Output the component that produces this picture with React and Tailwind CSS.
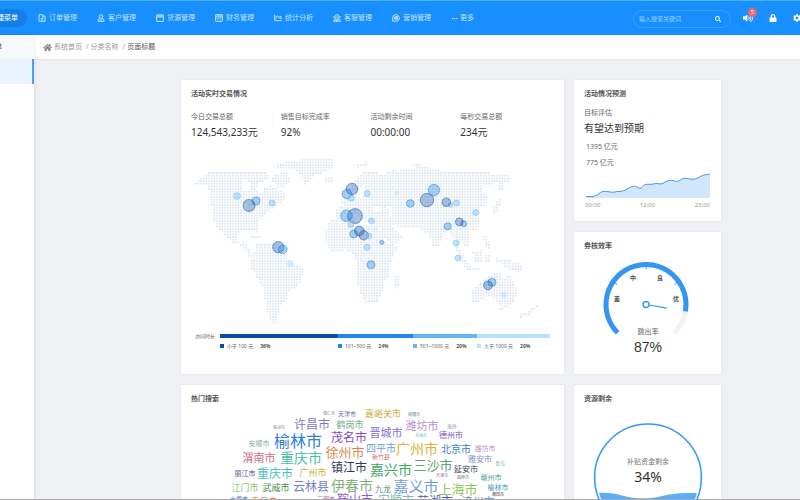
import React from 'react';
import { FaHome, FaSearch, FaVolumeUp, FaLock, FaCog } from 'react-icons/fa';
import { Ellipsis } from 'lucide-react';

const NAV = [
  { label: '订单管理', Icon: OrderIcon },
  { label: '客户管理', Icon: ClientIcon },
  { label: '货源管理', Icon: BoxIcon },
  { label: '财务管理', Icon: FinanceIcon },
  { label: '统计分析', Icon: TrendIcon },
  { label: '客服管理', Icon: ServiceIcon },
  { label: '营销管理', Icon: MarketIcon },
];

function Stroke({ children, className }) {
  return (
    <svg viewBox="0 0 24 24" fill="none" stroke="currentColor" strokeWidth="3" className={className} aria-hidden="true">
      {children}
    </svg>
  );
}
function OrderIcon({ className }) {
  return <Stroke className={className}><path d="M3 2h12l6 6v14H3zM14 2v7h7M8 13h8M8 18h8" /></Stroke>;
}
function ClientIcon({ className }) {
  return <Stroke className={className}><circle cx="12" cy="7.500" r="5.500" /><path d="M8 12l-5 6v4h18v-4l-5-6M8 18h8" /></Stroke>;
}
function BoxIcon({ className }) {
  return <Stroke className={className}><path d="M2 9h20v13H2zM2 9V3h20v6M8 1v8M16 1v8" /></Stroke>;
}
function FinanceIcon({ className }) {
  return <Stroke className={className}><path d="M2 2h20v20H2zM2 9h20M6 5.500h12M7 13.500h3M14 13.500h3M7 18h3M14 18h3" /></Stroke>;
}
function TrendIcon({ className }) {
  return <Stroke className={className}><path d="M2 3v17h21M6 15V8l5-2 4 4 6-3v8M15 10l6 6" /></Stroke>;
}
function ServiceIcon({ className }) {
  return <Stroke className={className}><path d="M6 8a6 6 0 0 1 12 0v2a6 6 0 0 1-12 0zM3 6v6M21 6v6M8 16l-6 2v4h20v-4l-6-2M8 9h8M8 20h8" /></Stroke>;
}
function MarketIcon({ className }) {
  return <Stroke className={className}><path d="M12 2a10 10 0 1 1-6 18l-4 2V12A10 10 0 0 1 12 2zM8 15V9l8-2v9zM8 12h8M12 8v8" /></Stroke>;
}

const LAND = [
  [[195,184],[201,178],[207,173],[235,172],[262,171],[270,174],[268,179],[259,183],[256,190],[262,193],[266,187],[270,186],[280,190],[286,196],[286,201],[276,206],[268,211],[262,218],[258,223],[257,234],[253,230],[243,230],[236,233],[236,240],[241,243],[246,241],[247,246],[253,256],[249,256],[243,247],[232,242],[222,234],[215,224],[212,212],[211,196],[207,186]],
  [[286,160],[334,159],[332,168],[322,173],[313,176],[305,184],[301,176],[297,171],[286,168]],
  [[270,180],[280,172],[288,173],[290,182],[284,188],[276,186]],
  [[276,165],[290,163],[290,168],[276,170]],
  [[326,176],[334,176],[334,181],[326,181]],
  [[358,164],[368,162],[366,167],[358,168]],
  [[392,169],[396,168],[396,172],[392,172]],
  [[413,164],[422,163],[422,167],[413,167]],
  [[256,245],[272,243],[283,248],[290,262],[303,267],[303,274],[298,287],[290,289],[287,299],[280,306],[277,317],[278,325],[271,323],[266,307],[263,287],[257,279],[250,266],[254,252]],
  [[330,219],[345,217],[353,218],[356,223],[365,225],[377,224],[380,231],[386,243],[398,246],[393,258],[388,266],[388,277],[383,284],[382,294],[377,302],[367,303],[362,299],[358,284],[358,270],[355,256],[346,250],[332,252],[325,243],[324,236]],
  [[395,276],[401,274],[399,286],[395,290]],
  [[378,225],[388,223],[395,229],[402,236],[400,241],[390,245],[384,238]],
  [[336,217],[336,208],[344,207],[341,202],[348,199],[352,195],[350,190],[352,183],[360,174],[370,170],[377,172],[383,176],[388,172],[397,171],[405,169],[413,168],[427,165],[433,170],[457,171],[480,172],[510,175],[512,180],[503,183],[503,190],[499,190],[497,183],[490,184],[482,187],[484,193],[488,199],[486,206],[479,208],[476,213],[480,218],[480,225],[475,230],[468,231],[470,238],[470,246],[465,246],[461,240],[459,246],[461,255],[457,252],[455,240],[448,230],[443,236],[438,248],[433,245],[428,234],[421,229],[405,228],[396,226],[388,225],[378,225],[374,221],[365,221],[361,214],[365,221],[358,217],[353,213],[346,212],[343,217]],
  [[341,190],[346,191],[346,201],[341,202]],
  [[499,198],[502,201],[498,212],[492,215],[493,210]],
  [[457,252],[462,254],[470,266],[480,269],[478,272],[466,269],[460,260]],
  [[473,253],[482,250],[482,261],[474,261]],
  [[485,254],[492,253],[489,262],[485,263]],
  [[495,258],[510,260],[524,265],[519,272],[507,268],[497,262]],
  [[482,235],[486,235],[491,247],[487,249]],
  [[473,288],[480,283],[490,276],[496,273],[501,273],[503,279],[507,280],[508,272],[513,282],[518,292],[515,299],[508,307],[499,306],[496,300],[487,296],[480,301],[473,302]],
  [[536,305],[539,306],[530,314],[519,318],[518,315],[528,312]],
  [[499,309],[504,309],[502,312]],
  [[249,236],[257,235],[263,239],[256,239]],
];

const WATER = [
  [[373,206],[381,206],[381,211],[373,211]],
  [[387,206],[392,207],[393,216],[389,216]],
  [[359,192],[363,186],[366,186],[363,197],[356,200]],
  [[242,180],[252,182],[250,190],[244,192]],
  [[240,204],[247,204],[247,208],[240,208]],
];

function inside(shape, x, y) {
  let hit = false;
  for (let i = 0, j = shape.length - 1; i < shape.length; j = i++) {
    const [xi, yi] = shape[i];
    const [xj, yj] = shape[j];
    if (yi > y !== yj > y && x < ((xj - xi) * (y - yi)) / (yj - yi) + xi) hit = !hit;
  }
  return hit;
}

function landDots() {
  const step = 8 / 3;
  let d = '';
  for (let y = 157; y < 328; y += step) {
    for (let x = 193; x < 552; x += step) {
      if (LAND.some((s) => inside(s, x, y)) && !WATER.some((s) => inside(s, x, y))) {
        d += `M${(x - 0.9).toFixed(2)} ${(y - 0.9).toFixed(2)}h1.8v1.8h-1.8z`;
      }
    }
  }
  return d;
}
const DOTS = landDots();

const TONES = {
  dark: ['#1f5fb8', 0.38, '#0d47a1'],
  mid: ['#2f97f0', 0.42, '#1976d2'],
  light: ['#7cc4f8', 0.45, '#64b5f6'],
  faint: ['#90cdf8', 0.3, '#bfe2fb'],
};
const BUBBLES = [
  [237,196,3.3,'light'],[256,201,4,'mid'],[249,205.5,6,'dark'],[272,203,3,'light'],
  [347,194,4.8,'mid'],[352,189,5.7,'dark'],[351,198,3.2,'light'],[367,193.5,3,'light'],
  [346.5,215.7,5.8,'mid'],[355,216,7.4,'dark'],[371.5,221,3,'light'],[351,224.5,3,'light'],
  [397,193,2,'faint'],[410.3,203.5,3.8,'mid'],[434,190,5.7,'mid'],[427,200,6.7,'dark'],
  [450.5,205,2.2,'light'],[446.3,202.2,4.3,'dark'],[456.5,203,3,'light'],[476,212.5,3,'light'],
  [463.7,223.8,3,'mid'],[459.3,221.8,3.9,'dark'],[278.3,247.2,5.6,'dark'],[282.8,249.4,4.4,'mid'],
  [290.3,263.7,3,'faint'],[353.7,234,4,'mid'],[359.3,231,4.8,'dark'],[363.7,235.3,4.7,'dark'],
  [369,236,2.8,'light'],[367,247.3,3,'light'],[371,264.8,4,'mid'],[381.8,242.4,2,'mid'],
  [447.7,226.3,3.6,'mid'],[456,243,2.9,'light'],[458,258,2.9,'light'],
  [492,282.3,4,'mid'],[488,285.4,4.4,'dark'],[503.8,294.8,2.8,'faint'],
];

const LEGEND = [
  { name: '小于 100 元', share: '36%', color: 'bg-[#0d4ba8]' },
  { name: '101~500 元', share: '24%', color: 'bg-[#1e88f0]' },
  { name: '501~1000 元', share: '20%', color: 'bg-[#64b5f6]' },
  { name: '大于 1000 元', share: '20%', color: 'bg-[#bbe0fb]' },
];

const STATS = [
  ['今日交易总额', '124,543,233元'],
  ['销售目标完成率', '92%'],
  ['活动剩余时间', '00:00:00'],
  ['每秒交易总额', '234元'],
];

const WORDS = [
  ['铜仁市',329,413,4,'#5e7f6b'],['天津市',347,413,6,'#6f5fa8'],['嘉峪关市',383,413,9,'#cdae3a'],['南通市',414,414,4,'#4f8f6a'],
  ['许昌市',312,424,12,'#8578bd'],['鹤岗市',350,424,9,'#6db08a'],['潍坊市',422,425,11,'#b98fc8'],['海外',452,425,5,'#a088a8'],
  ['株洲市',279,427,4,'#7a8f7a'],['晋城市',386,432,11,'#7f72d0'],['北海市',421,435,4,'#6dbfa8'],['德州市',451,434,8,'#7b4fc0'],
  ['安顺市',259,442,7,'#7fb0a0'],['榆林市',298,440,16,'#2f80d8'],['茂名市',349,437,12,'#8549c8'],['四平市',381,447,10,'#6f9fd8'],
  ['广州市',417,448,14,'#dcb33a'],['北京市',456,448,10,'#3b7dc8'],['潍坊市',485,447,7,'#b58cc0'],['新竹县',381,456,6,'#c86f80'],
  ['徐州市',345,451,13,'#d8894f'],['渭南市',259,457,11,'#cf6a80'],['重庆市',301,457,14,'#4fbfa8'],['镇江市',349,467,12,'#2f3560'],
  ['嘉兴市',391,469,14,'#3fa860'],['三沙市',433,464,13,'#5f9f70'],['雅安市',480,458,8,'#7f8fc8'],['青岛',500,462,5,'#7fa8c0'],
  ['延安市',466,468,8,'#3a4050'],['丽江市',245,472,7,'#4f4f80'],['重庆市',275,473,12,'#4fc0b8'],['广州市',313,472,9,'#d0b040'],
  ['天津市',442,475,4,'#9060b0'],['固原市',463,477,4,'#60705a'],['赣州市',491,476,7,'#3fa090'],['江门市',245,487,9,'#98c070'],
  ['武威市',276,487,9,'#4f8f50'],['云林县',311,486,12,'#6f80c8'],['伊春市',352,485,14,'#7fb080'],['九龙',383,488,8,'#5f8f70'],
  ['嘉义市',416,485,15,'#6f9fe0'],['上海市',458,488,13,'#90c860'],['榆林市',498,486,7,'#3fa0b8'],['莆田市',498,494,4,'#403040'],
  ['十堰市',239,498,6,'#4f80b0'],['秦皇岛',264,501,9,'#d08050'],['三明市',326,498,6,'#b070a0'],['鞍山市',355,499,12,'#9060c8'],
  ['安顺市',396,500,12,'#70c0a8'],['芜湖市',435,501,12,'#5060a0'],['漳州市',478,501,11,'#6090a0'],
];

function Card({ title, className = '', children }) {
  return (
    <section className={`bg-white px-[10px] pt-[10px] shadow-[0_0_2px_rgba(0,0,0,0.08)] ${className}`}>
      <h2 className="text-[7px] leading-[8px] font-bold text-[#555]">{title}</h2>
      {children}
    </section>
  );
}

function polar(angle, r) {
  const a = (angle * Math.PI) / 180;
  return [646 + r * Math.cos(a), 304.5 - r * Math.sin(a)];
}
function arc(from, to, r) {
  const [x1, y1] = polar(from, r);
  const [x2, y2] = polar(to, r);
  return `M${x1} ${y1}A${r} ${r} 0 ${from - to > 180 ? 1 : 0} 1 ${x2} ${y2}`;
}

function Gauge() {
  const end = 225 - 270 * 0.87;
  const [nx, ny] = polar(end, 21);
  const [sx, sy] = polar(end, 3);
  return (
    <svg viewBox="584 258 127 98" className="mt-2 block w-full" role="img" aria-label="跳出率 87%">
      <path d={arc(225, -45, 40)} fill="none" stroke="#f0f2f5" strokeWidth="5" />
      <path d={arc(225, end, 40)} fill="none" stroke="#3396f5" strokeWidth="5" />
      {[145, 90, 35].map((a) => {
        const [x1, y1] = polar(a, 38);
        const [x2, y2] = polar(a, 35);
        return <path key={a} d={`M${x1} ${y1}L${x2} ${y2}`} stroke="#3396f5" />;
      })}
      <path d={`M${sx} ${sy}L${nx} ${ny}`} stroke="#3396f5" strokeWidth="1.2" />
      <circle cx="646" cy="304.5" r="3" fill="#fff" stroke="#3396f5" strokeWidth="1.4" />
      <g textAnchor="middle" fill="#555" fontSize="6" fontWeight="bold">
        <text x="617" y="301">差</text>
        <text x="633" y="280">中</text>
        <text x="660" y="280">良</text>
        <text x="676" y="301">优</text>
      </g>
      <text x="648" y="334" textAnchor="middle" fontSize="7" fill="#666">跳出率</text>
      <text x="648" y="352" textAnchor="middle" fontSize="14" fill="#333" className="font-['Liberation_Sans',sans-serif]">87%</text>
    </svg>
  );
}

export default function App() {
  return (
    <div className="flex h-screen flex-col overflow-hidden border-b border-[#aaa] bg-[#eef0f4] font-['Noto_Sans','Noto_Sans_CJK_SC',sans-serif] text-[7px] leading-[10px] text-[#666]">
      <header className="flex h-[35px] shrink-0 items-center overflow-hidden border-t border-[#4db0fb] bg-[#188fff] text-[#c4e2ff]">
        <button className="-ml-[19px] h-[18px] shrink-0 rounded-full bg-[#1280e6] px-[9px] text-white">快捷菜单</button>
        <nav className="ml-[11px] flex shrink-0 items-center gap-5">
          {NAV.map(({ label, Icon }) => (
            <a key={label} href="#" className="flex items-center gap-[3px] whitespace-nowrap">
              <Icon className="size-2" />
              {label}
            </a>
          ))}
          <a href="#" className="flex items-center gap-[2px] whitespace-nowrap">
            <Ellipsis className="size-[7px]" strokeWidth={3} />
            更多
          </a>
        </nav>
        <form className="mt-[2px] ml-auto flex h-[18px] w-[98px] shrink-0 items-center rounded-full border border-[#3c9ffd] px-[5px]">
          <input aria-label="搜索" placeholder="输入搜索关键词" className="w-full min-w-0 bg-transparent text-[6px] outline-none placeholder:text-[#a5d2ff]" />
          <button type="button" aria-label="搜索" className="mr-1 text-white"><FaSearch className="size-[6px]" /></button>
        </form>
        <div className="ml-3 flex shrink-0 items-center gap-4 text-white">
          <button aria-label="消息" className="relative">
            <FaVolumeUp className="size-[10px]" />
            <span className="absolute -top-[5px] -right-1 size-[9px] rounded-full bg-[#f5646c] text-center text-[6px] leading-[9px]">5</span>
          </button>
          <button aria-label="锁定"><FaLock className="size-[8px]" /></button>
          <button aria-label="设置" className="-mr-px"><FaCog className="size-[8px]" /></button>
        </div>
      </header>

      <div className="flex min-h-0 flex-1">
        <aside className="z-10 w-[34px] shrink-0 overflow-hidden bg-white shadow-[0_0_4px_rgba(0,0,0,0.12)]">
          <div className="flex h-6 items-center bg-[#f7f8f9] text-[#444]"><span className="-ml-[26px] whitespace-nowrap">订单菜单</span></div>
          <a href="#" aria-label="当前菜单" className="block h-[25px] border-r-2 border-[#4c9fee] bg-[#eaf4ff]" />
        </aside>

        <div className="flex min-w-0 flex-1 flex-col">
          <nav aria-label="面包屑" className="flex h-[25px] shrink-0 items-center border-b border-[#e4e6ea] bg-white pl-[9px] text-[#999]">
            <FaHome className="mr-[2px] size-[9px] text-[#888]" />
            <a href="#">系统首页</a>
            <span className="mr-[2px] ml-1">/</span>
            <a href="#">分类名称</a>
            <span className="mr-[2px] ml-1">/</span>
            <span className="text-[#555]">页面标题</span>
          </nav>

          <main className="grid min-h-0 flex-1 grid-cols-[383fr_147fr] items-start gap-[10px] overflow-hidden pt-5 pr-[79px] pl-[147px]">
            <div className="flex min-w-0 flex-col gap-[11px]">
              <Card title="活动实时交易情况" className="pb-[25px]">
                <dl className="mt-[14px] grid grid-cols-4 pr-1">
                  {STATS.map(([k, v]) => (
                    <div key={k}>
                      <dt>{k}</dt>
                      <dd className="mt-[3px] text-[10px] leading-[14px] text-[#333]">{v}</dd>
                    </div>
                  ))}
                </dl>
                <svg viewBox="191 155 363 175" className="mt-4 block w-full" role="img" aria-label="世界地图">
                  <path d={DOTS} fill="#e0e8f0" />
                  {BUBBLES.map(([x, y, r, tone], i) => (
                    <circle key={i} cx={x} cy={y} r={r} fill={TONES[tone][0]} fillOpacity={TONES[tone][1]} stroke={TONES[tone][2]} strokeWidth="0.7" strokeOpacity="0.7" />
                  ))}
                </svg>
                <div className="mt-1 flex gap-1 px-1 text-[5px] leading-[5px]">
                  <span className="w-[21px] shrink-0 whitespace-nowrap">访问时长</span>
                  <ul className="grid flex-1 grid-cols-[118fr_75fr_64fr_73fr]">
                    {LEGEND.map(({ name, share, color }) => (
                      <li key={name} className="min-w-0">
                        <div className={`h-1 ${color}`} />
                        <div className="mt-[5px] flex items-center gap-[3px] leading-[6px] whitespace-nowrap">
                          <i className={`size-1 ${color}`} />
                          <span>{name}</span>
                          <b className="ml-1 text-[#555]">{share}</b>
                        </div>
                      </li>
                    ))}
                  </ul>
                </div>
              </Card>

              <Card title="热门搜索">
                <svg viewBox="191 403 363 110" className="mt-px block w-full" role="img" aria-label="热门搜索词云">
                  {WORDS.map(([w, x, y, size, color], i) => (
                    <text key={i} x={x} y={y + size * 0.37} fontSize={size} fill={color} textAnchor="middle">{w}</text>
                  ))}
                </svg>
              </Card>
            </div>

            <div className="flex min-w-0 flex-col gap-[11px]">
              <Card title="活动情况预测" className="pb-3">
                <p className="mt-[10px]">目标评估</p>
                <p className="mt-[3px] text-[10px] leading-[14px] text-[#333]">有望达到预期</p>
                <p className="mt-[7px] pl-[2px]">1395 亿元</p>
                <p className="mt-[6px] pl-[2px]">775 亿元</p>
                <svg viewBox="584 172 127 27" className="mt-1 block w-full" role="img" aria-label="趋势图">
                  <path d="M586 198V196.500C590 196.700 594 196.900 597 195C600 193 601 191.200 605 191.300C609 191.500 612 193 617 191.600C621 191.300 624 191.500 628 188.500C632 186 635 185.600 638 187.500C641 189.700 642 187 644 185C647 183.500 651 185 655 183.700C658 182.800 660 185 663 183.300C667 180.500 670 179.800 673 180.500C676 181.600 679 181.800 681 179.500C684 177.300 688 178.800 691 179.200C696 180 698 177.500 702 175.800C705 174.600 708 174.500 710 174V198Z" fill="#cfe6fc" />
                  <path d="M586 196.500C590 196.700 594 196.900 597 195C600 193 601 191.200 605 191.300C609 191.500 612 193 617 191.600C621 191.300 624 191.500 628 188.500C632 186 635 185.600 638 187.500C641 189.700 642 187 644 185C647 183.500 651 185 655 183.700C658 182.800 660 185 663 183.300C667 180.500 670 179.800 673 180.500C676 181.600 679 181.800 681 179.500C684 177.300 688 178.800 691 179.200C696 180 698 177.500 702 175.800C705 174.600 708 174.500 710 174" fill="none" stroke="#4a98dc" strokeWidth="1" />
                </svg>
                <div className="mt-[2px] flex justify-between px-px text-[6px] leading-[8px] text-[#999]">
                  <span>00:00</span><span>12:00</span><span>23:00</span>
                </div>
              </Card>

              <Card title="券核效率" className="pb-[18px]">
                <Gauge />
              </Card>

              <Card title="资源剩余">
                <svg viewBox="584 420 127 115" className="mt-[17px] block w-full" role="img" aria-label="补贴资金剩余 34%">
                  <clipPath id="tank"><circle cx="648" cy="477.500" r="51.500" /></clipPath>
                  <circle cx="648" cy="477.500" r="53.400" fill="#fff" stroke="#3396f5" strokeWidth="1.500" />
                  <path clipPath="url(#tank)" d="M594 493.500C604 492 613 493 622 495.500C634 499 648 499 658 497C672 493.500 684 492 702 493.500V535H594Z" fill="#5aadf8" />
                  <text x="648" y="464" textAnchor="middle" fontSize="7" fill="#777">补贴资金剩余</text>
                  <text x="648" y="482" textAnchor="middle" fontSize="14" fill="#333">34%</text>
                </svg>
              </Card>
            </div>
          </main>
        </div>
      </div>
    </div>
  );
}
